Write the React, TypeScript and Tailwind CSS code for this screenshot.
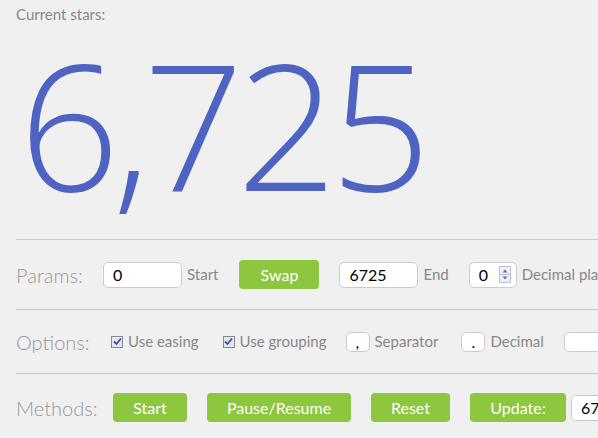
import type { ReactNode } from 'react';

const font = { fontFamily: 'Lato, "Open Sans", sans-serif' };
const bigFont = { fontFamily: '"Open Sans", Lato, sans-serif' };

function RowLabel({ children }: { children: ReactNode }) {
  return <span className="w-[87px] shrink-0 text-[20px] font-light text-[#999]">{children}</span>;
}

function Hint({ children }: { children: ReactNode }) {
  return <span className="ml-[5px] whitespace-nowrap text-[15px] text-[#888]">{children}</span>;
}

function TextBox({ value, w, h = 'h-[26px]' }: { value: string; w: string; h?: string }) {
  return (
    <span
      className={`${w} ${h} flex shrink-0 items-center rounded-[5px] border border-[#ccc] bg-white px-[9px] text-[16px] text-black`}
    >
      {value}
    </span>
  );
}

function GreenButton({ children, w }: { children: ReactNode; w: string }) {
  return (
    <span
      className={`${w} flex h-[29px] shrink-0 items-center justify-center rounded-[4px] bg-[#8dc63f] text-[16px] text-white`}
    >
      {children}
    </span>
  );
}

function Check({ label }: { label: string }) {
  return (
    <span className="flex items-center gap-[5px] whitespace-nowrap text-[15px] text-[#888]">
      <span className="grid h-[12px] w-[12px] place-items-center border border-[#888] bg-[#e4e7f4]">
        <svg width="9" height="9" viewBox="0 0 9 9">
          <path d="M1 4.5 L3.5 7 L8 1.5" fill="none" stroke="#3c4fa8" strokeWidth="1.8" />
        </svg>
      </span>
      {label}
    </span>
  );
}

export default function App() {
  return (
    <div className="h-[438px] w-[598px] overflow-hidden bg-[#f0f0f0]" style={font}>
      <div className="w-[760px] pl-4">
        <div className="h-[239px]">
          <p className="pt-[6px] text-[15px] leading-[16px] text-[#888]">Current stars:</p>
          <p
            className="mt-[10px] pl-[3px] text-[176px] font-light font-stretch-[88%] leading-[182px] tracking-[-7px] text-[#4f63c3]"
            style={bigFont}
          >
            6,725
          </p>
        </div>

        <div className="flex h-[70px] items-center border-t border-[#c8c8c8]">
          <RowLabel>Params:</RowLabel>
          <TextBox value="0" w="w-[79px]" />
          <Hint>Start</Hint>
          <span className="ml-[21px]">
            <GreenButton w="w-[80px]">Swap</GreenButton>
          </span>
          <span className="ml-[20px]">
            <TextBox value="6725" w="w-[79px]" />
          </span>
          <Hint>End</Hint>
          <span className="ml-[20px] flex h-[26px] w-[48px] shrink-0 items-center justify-between rounded-[5px] border border-[#ccc] bg-white pl-[9px] pr-[5px] text-[16px] text-black">
            0
            <svg width="12" height="17" viewBox="0 0 12 17">
              <rect x="0.5" y="0.5" width="11" height="16" fill="#eef0f6" stroke="#b8bfd6" />
              <line x1="1" y1="8.5" x2="11" y2="8.5" stroke="#b8bfd6" />
              <path d="M3.5 6.5 L6 3.5 L8.5 6.5 Z" fill="#5a6fb8" />
              <path d="M3.5 10.5 L6 13.5 L8.5 10.5 Z" fill="#5a6fb8" />
            </svg>
          </span>
          <Hint>Decimal places</Hint>
        </div>

        <div className="flex h-[64px] items-center border-t border-[#c8c8c8]">
          <RowLabel>Options:</RowLabel>
          <span className="ml-[8px]">
            <Check label="Use easing" />
          </span>
          <span className="ml-[24px]">
            <Check label="Use grouping" />
          </span>
          <span className="ml-[19px] flex items-center">
            <TextBox value="," w="w-[24px]" h="h-[20px]" />
          </span>
          <Hint>Separator</Hint>
          <span className="ml-[23px] flex items-center">
            <TextBox value="." w="w-[24px]" h="h-[20px]" />
          </span>
          <Hint>Decimal</Hint>
          <span className="ml-[20px] flex items-center">
            <TextBox value="" w="w-[60px]" h="h-[20px]" />
          </span>
        </div>

        <div className="flex h-[66px] items-center border-t border-[#c8c8c8] pt-[2px]">
          <RowLabel>Methods:</RowLabel>
          <span className="ml-[10px]">
            <GreenButton w="w-[74px]">Start</GreenButton>
          </span>
          <span className="ml-[20px]">
            <GreenButton w="w-[144px]">Pause/Resume</GreenButton>
          </span>
          <span className="ml-[20px]">
            <GreenButton w="w-[79px]">Reset</GreenButton>
          </span>
          <span className="ml-[20px]">
            <GreenButton w="w-[96px]">Update:</GreenButton>
          </span>
          <span className="ml-[5px]">
            <TextBox value="6725" w="w-[79px]" />
          </span>
        </div>
      </div>
    </div>
  );
}
